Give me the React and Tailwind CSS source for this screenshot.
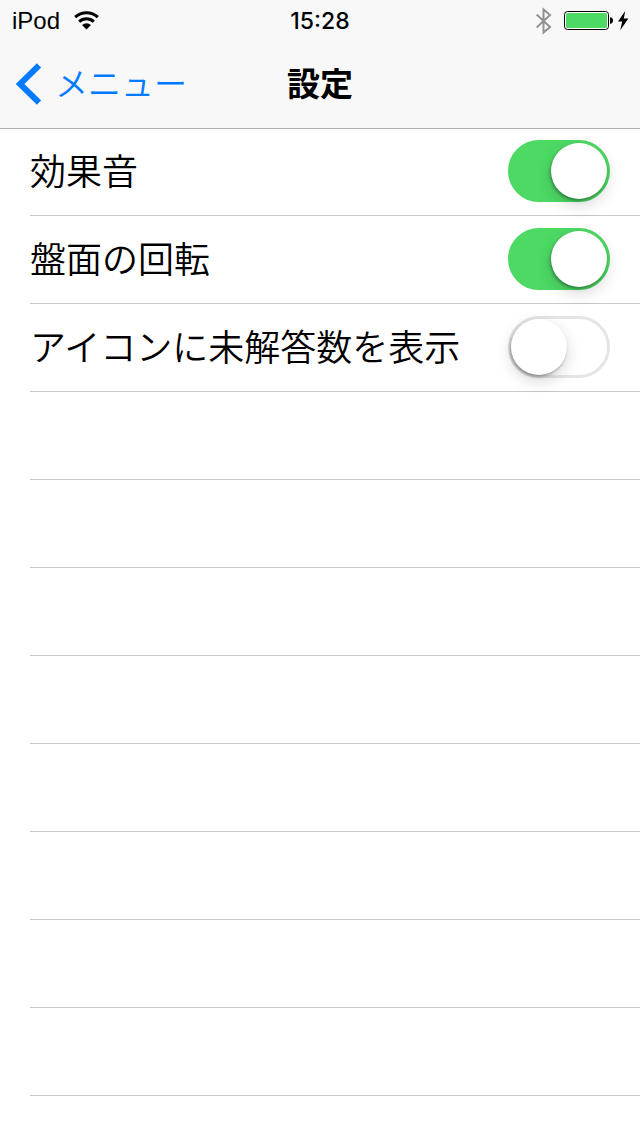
import { useState } from "react";

const initialSettings = [
  { id: "sound", label: "効果音", on: true },
  { id: "rotation", label: "盤面の回転", on: true },
  { id: "badge", label: "アイコンに未解答数を表示", on: false },
];

const emptyRows = [0, 1, 2, 3, 4, 5, 6, 7, 8];

function WifiIcon() {
  return (
    <svg width="26" height="20" viewBox="0 0 26 20" role="img" aria-label="Wi-Fi">
      <path d="M1.2 6.2A16.5 16.5 0 0 1 23.8 6.2" fill="none" stroke="#000" strokeWidth="3" />
      <path d="M5.2 10.6A10.6 10.6 0 0 1 19.8 10.6" fill="none" stroke="#000" strokeWidth="2.9" />
      <path d="M12.5 18.6L8 14Q12.5 10.5 17 14Z" fill="#000" />
    </svg>
  );
}

function BluetoothIcon() {
  return (
    <svg width="16" height="28" viewBox="0 0 16 28" role="img" aria-label="Bluetooth">
      <path d="M0.6 7.5L14 20L7.5 25.5V2.5L14 8L0.6 20.5" fill="none" stroke="#929292" strokeWidth="2" />
    </svg>
  );
}

function BatteryIcon() {
  return (
    <svg width="50" height="20" viewBox="0 0 50 20" role="img" aria-label="Battery">
      <rect x="0.5" y="0.5" width="44" height="18" rx="3" fill="#fff" stroke="#000" />
      <rect x="2" y="2" width="41" height="15" rx="1.5" fill="#4cd964" />
      <path d="M46 6.2Q49 6.5 49 9.5T46 12.8Z" fill="#000" />
    </svg>
  );
}

function BoltIcon() {
  return (
    <svg width="12" height="20" viewBox="0 0 12 20" role="img" aria-label="Charging">
      <path d="M7.2 0L0 10.6H4.2L2.2 19.2L10.4 7.6H5.8Z" fill="#000" />
    </svg>
  );
}

function StatusBar() {
  return (
    <div className="grid h-10 grid-cols-[1fr_auto_1fr] items-center px-3 pt-px font-['Liberation_Sans',sans-serif] text-2xl leading-10">
      <div className="flex items-center gap-3.5">
        <span>iPod</span>
        <WifiIcon />
      </div>
      <time className="font-['Inter',sans-serif] text-[23px] font-medium">15:28</time>
      <div className="-mr-0.5 flex items-center justify-end">
        <BluetoothIcon />
        <span className="w-3" />
        <BatteryIcon />
        <span className="w-1" />
        <BoltIcon />
      </div>
    </div>
  );
}

function NavBar() {
  return (
    <nav className="grid h-22 grid-cols-[1fr_auto_1fr] items-center px-4 text-[33px] leading-[48px]">
      <a href="#menu" className="flex items-center gap-3.5 font-[350] text-[#007aff]">
        <svg width="25" height="42" viewBox="0 0 25 42" aria-hidden="true">
          <path d="M23 2.5L4 21L23 39.5" fill="none" stroke="#007aff" strokeWidth="6" />
        </svg>
        <span className="pb-1">メニュー</span>
      </a>
      <h1 className="pb-1 font-bold">設定</h1>
    </nav>
  );
}

function SettingRow({ id, label, on, onToggle }) {
  return (
    <li className="flex h-22 items-center justify-between border-b border-[#c8c7cc] pr-[30px] pb-0.5">
      <label htmlFor={id} className="pb-1 text-4xl leading-[54px] font-[350]">
        {label}
      </label>
      <input
        id={id}
        type="checkbox"
        role="switch"
        checked={on}
        onChange={onToggle}
        className="flex h-[62px] w-[102px] shrink-0 appearance-none rounded-full border-3 border-[#e5e5e5] bg-white before:size-14 before:rounded-full before:bg-white before:shadow-[-1px_2px_3px_rgba(0,0,0,0.3),0_6px_16px_rgba(0,0,0,0.16)] checked:justify-end checked:border-[#4cd964] checked:bg-[#4cd964]"
      />
    </li>
  );
}

export default function App() {
  const [settings, setSettings] = useState(initialSettings);
  const toggle = (id) =>
    setSettings((items) => items.map((s) => (s.id === id ? { ...s, on: !s.on } : s)));

  return (
    <div className="min-h-screen overflow-hidden bg-white font-['Noto_Sans_CJK_JP',sans-serif] text-black">
      <header className="-mb-px border-b border-[#b2b2b2] bg-[#f8f8f8]">
        <StatusBar />
        <NavBar />
      </header>
      <main>
        <ul className="pl-[30px]">
          {settings.map((s) => (
            <SettingRow key={s.id} {...s} onToggle={() => toggle(s.id)} />
          ))}
          {emptyRows.map((n) => (
            <li key={n} aria-hidden="true" className="h-22 border-b border-[#c8c7cc] last:h-10 last:border-b-0" />
          ))}
        </ul>
      </main>
    </div>
  );
}
